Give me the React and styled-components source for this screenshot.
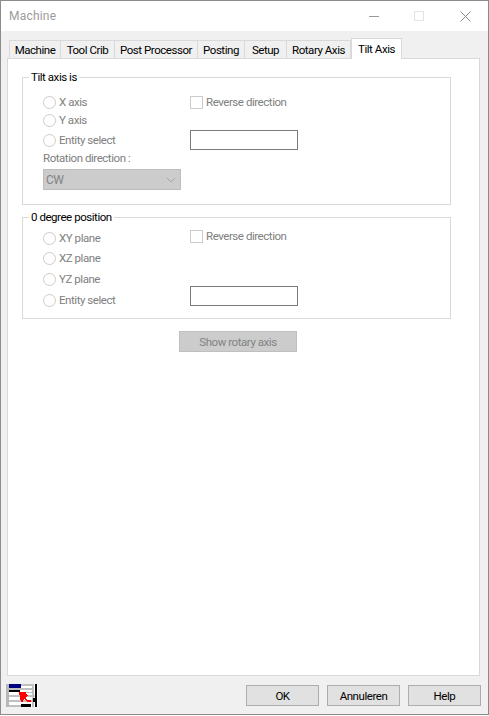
import React from 'react'
import styled, { createGlobalStyle } from 'styled-components'

const GlobalStyle = createGlobalStyle`
  html, body {
    margin: 0;
    padding: 0;
    background: #fff;
  }
  body {
    font-family: Roboto, "Liberation Sans", sans-serif;
    font-size: 11.5px;
    letter-spacing: -0.45px;
    color: #000;
  }
`

const Window = styled.div`
  box-sizing: border-box;
  width: 489px;
  height: 715px;
  border: 1px solid #8c8c8c;
  display: flex;
  flex-direction: column;
  background: #f0f0f0;
`

const TitleBar = styled.div`
  height: 30px;
  flex: none;
  background: #fff;
  display: flex;
  align-items: center;
  padding-left: 8px;
  color: #9b9b9b;
  font-size: 12px;
  letter-spacing: 0.2px;
`

const TitleText = styled.span`
  flex: 1;
`

const WinButton = styled.div`
  box-sizing: border-box;
  width: 46px;
  height: 30px;
  padding-left: ${p => p.$nudge || 0}px;
  display: flex;
  align-items: center;
  justify-content: center;
`

const TabStrip = styled.div`
  display: flex;
  align-items: flex-end;
  height: 27px;
  flex: none;
  padding-left: 8px;
`

const Tab = styled.div`
  box-sizing: border-box;
  position: relative;
  z-index: ${p => (p.$active ? 1 : 0)};
  width: ${p => p.$w}px;
  height: ${p => (p.$active ? 21 : 18)}px;
  margin-bottom: ${p => (p.$active ? -1 : 0)}px;
  display: flex;
  align-items: center;
  justify-content: center;
  background: ${p => (p.$active ? '#fff' : '#f0f0f0')};
  border: 1px solid #d9d9d9;
  border-bottom: 0;
  border-left: ${p => (p.$first || p.$active ? '1px solid #d9d9d9' : 'none')};
  white-space: nowrap;
`

const Panel = styled.div`
  box-sizing: border-box;
  margin: 0 8px 0 6px;
  height: 618px;
  flex: none;
  background: #fff;
  border: 1px solid #d9d9d9;
  padding: 11px 28px 0 14px;
  display: flex;
  flex-direction: column;
`

const Group = styled.fieldset`
  box-sizing: border-box;
  margin: ${p => p.$top}px 0 0;
  padding: ${p => p.$pad}px 0 0 20px;
  height: ${p => p.$h}px;
  border: 1px solid #d9d9d9;
  min-width: 0;
`

const Legend = styled.legend`
  padding: 0 2px;
  margin-left: -14px;
  line-height: 14px;
  color: #000;
`

const Row = styled.div`
  display: grid;
  grid-template-columns: 147px 108px;
  grid-template-rows: ${p => p.$h}px;
  align-items: center;
  height: ${p => p.$h}px;
`

const Option = styled.label`
  display: flex;
  align-items: center;
  gap: 3px;
  color: #808080;
  white-space: nowrap;
`

const Radio = styled.span`
  box-sizing: border-box;
  width: 13px;
  height: 13px;
  border: 1px solid #ccc;
  border-radius: 50%;
  background: #fff;
  flex: none;
`

const CheckOption = styled(Option)`
  margin-bottom: ${p => p.$lift || 0}px;
`

const Check = styled.span`
  box-sizing: border-box;
  width: 13px;
  height: 13px;
  border: 1px solid #ccc;
  background: #fff;
  flex: none;
`

const TextBox = styled.div`
  box-sizing: border-box;
  width: 108px;
  height: 20px;
  border: 1px solid #7a7a7a;
  background: #fff;
  margin-bottom: ${p => p.$lift || 0}px;
`

const FieldLabel = styled.div`
  height: 14px;
  line-height: 14px;
  color: #808080;
`

const Select = styled.div`
  box-sizing: border-box;
  width: 138px;
  height: 21px;
  margin-top: 4px;
  padding: 0 4px 0 2px;
  background: #cccccc;
  border: 1px solid #bdbdbd;
  color: #838383;
  font-size: 12px;
  display: flex;
  align-items: center;
  justify-content: space-between;
`

const CenterRow = styled.div`
  display: flex;
  padding-left: 157px;
  margin-top: 12px;
`

const DisabledButton = styled.div`
  box-sizing: border-box;
  width: 118px;
  height: 21px;
  background: #cccccc;
  border: 1px solid #bfbfbf;
  color: #838383;
  display: flex;
  align-items: center;
  justify-content: center;
`

const Footer = styled.div`
  flex: 1;
  display: flex;
  align-items: flex-start;
  justify-content: space-between;
  padding: 8px 7px 0 5px;
`

const Buttons = styled.div`
  display: flex;
  gap: 8px;
  padding-top: 1px;
`

const Button = styled.div`
  box-sizing: border-box;
  width: 73px;
  height: 21px;
  background: #e1e1e1;
  border: 1px solid #adadad;
  display: flex;
  align-items: center;
  justify-content: center;
`

const tabs = [
  ['Machine', 52],
  ['Tool Crib', 54],
  ['Post Processor', 83],
  ['Posting', 47],
  ['Setup', 42],
  ['Rotary Axis', 64],
]

const MachineIcon = () => (
  <svg width="32" height="23" viewBox="0 0 32 23" shapeRendering="crispEdges">
    <rect width="32" height="23" fill="#fff" />
    <rect x="0" y="0" width="3" height="23" fill="#b8b8b8" />
    <rect x="3" y="0" width="12" height="4" fill="#000080" />
    <rect x="15" y="0" width="12" height="2" fill="#c0c0c0" />
    <rect x="3" y="4" width="24" height="2" fill="#c0c0c0" />
    <rect x="3" y="6" width="11" height="2" fill="#000" />
    <rect x="14" y="8" width="13" height="1" fill="#c0c0c0" />
    <rect x="3" y="11" width="26" height="2" fill="#c0c0c0" />
    <rect x="3" y="16" width="26" height="2" fill="#c0c0c0" />
    <rect x="15" y="20" width="10" height="3" fill="#000" />
    <rect x="3" y="21" width="12" height="2" fill="#c0c0c0" />
    <rect x="26" y="0" width="2" height="23" fill="#c0c0c0" />
    <rect x="29" y="0" width="2" height="23" fill="#000" />
    <rect x="27" y="14" width="2" height="4" fill="#000" />
    <polygon points="13,8 20,8 20,10 22,12 19,14 22,16 25,16 25,18 21,18 18,15 17,18 15,18" fill="#f00" />
  </svg>
)

const Chevron = () => (
  <svg width="10" height="6" viewBox="0 0 10 6">
    <path d="M1 1l4 4 4-4" fill="none" stroke="#a6a6a6" />
  </svg>
)

const App = () => (
  <>
    <GlobalStyle />
    <Window>
      <TitleBar>
        <TitleText>Machine</TitleText>
        <WinButton $nudge={2}>
          <svg width="10" height="1"><rect width="10" height="1" fill="#9a9a9a" /></svg>
        </WinButton>
        <WinButton>
          <svg width="10" height="10"><rect x="0.5" y="0.5" width="9" height="9" fill="none" stroke="#e4e4e4" /></svg>
        </WinButton>
        <WinButton>
          <svg width="11" height="11"><path d="M0.5 0.5l10 10M10.5 0.5l-10 10" stroke="#8a8a8a" fill="none" /></svg>
        </WinButton>
      </TitleBar>
      <TabStrip>
        {tabs.map(([name, w], i) => (
          <Tab key={name} $w={w} $first={i === 0}>{name}</Tab>
        ))}
        <Tab $w={51} $active>Tilt Axis</Tab>
      </TabStrip>
      <Panel>
        <Group $top={0} $h={135} $pad={9}>
          <Legend>Tilt axis is</Legend>
          <Row $h={18}>
            <Option><Radio />X axis</Option>
            <CheckOption><Check />Reverse direction</CheckOption>
          </Row>
          <Row $h={18}>
            <Option><Radio />Y axis</Option>
          </Row>
          <Row $h={22}>
            <Option><Radio />Entity select</Option>
            <TextBox />
          </Row>
          <FieldLabel>Rotation direction :</FieldLabel>
          <Select>CW<Chevron /></Select>
        </Group>
        <Group $top={5} $h={109} $pad={4}>
          <Legend>0 degree position</Legend>
          <Row $h={20}>
            <Option><Radio />XY plane</Option>
            <CheckOption $lift={4}><Check />Reverse direction</CheckOption>
          </Row>
          <Row $h={20}>
            <Option><Radio />XZ plane</Option>
          </Row>
          <Row $h={22}>
            <Option><Radio />YZ plane</Option>
          </Row>
          <Row $h={20}>
            <Option><Radio />Entity select</Option>
            <TextBox $lift={9} />
          </Row>
        </Group>
        <CenterRow>
          <DisabledButton>Show rotary axis</DisabledButton>
        </CenterRow>
      </Panel>
      <Footer>
        <MachineIcon />
        <Buttons>
          <Button>OK</Button>
          <Button>Annuleren</Button>
          <Button>Help</Button>
        </Buttons>
      </Footer>
    </Window>
  </>
)

export default App
